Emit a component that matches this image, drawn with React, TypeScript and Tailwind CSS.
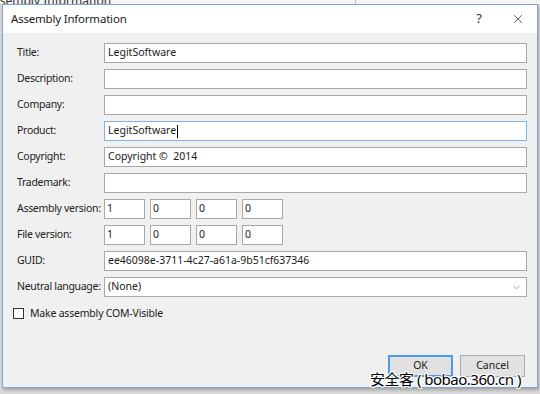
import { ChevronDown, X } from "lucide-react";

const FONT = "font-['Noto_Sans','Open_Sans',sans-serif]";

type Row = { label: string; value?: string; focused?: boolean };

const TEXT_ROWS: Row[] = [
  { label: "Title:", value: "LegitSoftware" },
  { label: "Description:" },
  { label: "Company:" },
  { label: "Product:", value: "LegitSoftware", focused: true },
  { label: "Copyright:", value: "Copyright ©  2014" },
  { label: "Trademark:" },
];

function Field({ value, focused }: { value?: string; focused?: boolean }) {
  return (
    <div
      className={`flex h-[20px] flex-1 items-center whitespace-pre border bg-white px-[3px] text-[10.5px] text-[#1a1a1a] ${
        focused ? "border-[#7eb4ea]" : "border-[#a8a8a8]"
      }`}
    >
      {value}
      {focused && <span className="ml-px h-[13px] w-px bg-black" />}
    </div>
  );
}

function Label({ children }: { children: string }) {
  return <span className="w-[87px] shrink-0 whitespace-nowrap tracking-[-0.3px]">{children}</span>;
}

function VersionRow({ label }: { label: string }) {
  return (
    <div className="flex h-[20px] items-center">
      <Label>{label}</Label>
      <div className="flex gap-[5px]">
        {["1", "0", "0", "0"].map((v, i) => (
          <div
            key={i}
            className="flex h-[20px] w-[41px] items-center border border-[#a8a8a8] bg-white px-[2px] text-[10.5px]"
          >
            {v}
          </div>
        ))}
      </div>
    </div>
  );
}

export default function App() {
  return (
    <div className={`relative h-[394px] w-[540px] overflow-hidden bg-[#d9d9d9] ${FONT}`}>
      {/* window behind */}
      <div className="relative h-[4px] overflow-hidden bg-[#f4f4f4]">
        <span className="absolute -top-[8px] -left-[6px] whitespace-nowrap text-[12px] text-[#333]">ssembly Information</span>
        <span className="absolute left-[355px] top-0 h-[4px] w-px bg-[#bbb]" />
      </div>

      <div className="ml-[2px] flex h-[384px] w-[536px] flex-col border border-[#7ca4d8] bg-[#f0f0f0] shadow-[1px_2px_3px_rgba(0,0,0,0.25)]">
        {/* title bar */}
        <div className="flex h-[28px] shrink-0 items-center bg-white pl-[8px] pr-[12px] text-[11.5px] text-[#1a1a1a]">
          <span className="flex-1 tracking-[-0.2px]">Assembly Information</span>
          <span className="mr-[29px] text-[13px] text-[#333]">?</span>
          <X className="h-[14px] w-[14px] text-[#333]" strokeWidth={1.3} />
        </div>

        <div className="flex flex-1 flex-col pl-[14px] pr-[10px] pt-[10px] text-[10.5px] text-[#222]">
          <div className="flex flex-col gap-[6px]">
            {TEXT_ROWS.map((r) => (
              <div key={r.label} className="flex h-[20px] items-center">
                <Label>{r.label}</Label>
                <Field value={r.value} focused={r.focused} />
              </div>
            ))}
            <VersionRow label="Assembly version:" />
            <VersionRow label="File version:" />
            <div className="flex h-[20px] items-center">
              <Label>GUID:</Label>
              <Field value="ee46098e-3711-4c27-a61a-9b51cf637346" />
            </div>
            <div className="flex h-[20px] items-center">
              <Label>Neutral language:</Label>
              <div className="flex h-[20px] flex-1 items-center border border-[#a8a8a8] bg-white pl-[3px] pr-[4px]">
                <span className="flex-1">(None)</span>
                <ChevronDown className="h-[11px] w-[11px] text-[#777]" strokeWidth={1.5} />
              </div>
            </div>
          </div>

          <label className="mt-[9px] flex items-center gap-[6px]">
            <span className="-ml-[4px] h-[11px] w-[11px] border border-[#333] bg-white" />
            <span className="tracking-[-0.2px]">Make assembly COM-Visible</span>
          </label>

          <div className="mt-auto mb-[10px] flex justify-end gap-[7px] pr-[2px]">
            <button className="h-[22px] w-[65px] border-2 border-[#4c9be8] bg-[#e1e1e1] text-[10.5px] text-[#222]">
              OK
            </button>
            <button className="h-[22px] w-[65px] border border-[#adadad] bg-[#e1e1e1] text-[10.5px] text-[#222]">
              Cancel
            </button>
          </div>
        </div>
      </div>

      {/* watermark */}
      <span className="absolute left-[370px] top-[368px] whitespace-pre text-[15px] text-black [text-shadow:1px_0_0_#fff,-1px_0_0_#fff,0_1px_0_#fff,0_-1px_0_#fff,1px_1px_0_#fff,-1px_-1px_0_#fff,1px_-1px_0_#fff,-1px_1px_0_#fff] font-['Noto_Sans','Noto_Sans_CJK_SC',sans-serif] tracking-[-0.5px]">
        安全客 ( bobao.360.cn )
      </span>
    </div>
  );
}
